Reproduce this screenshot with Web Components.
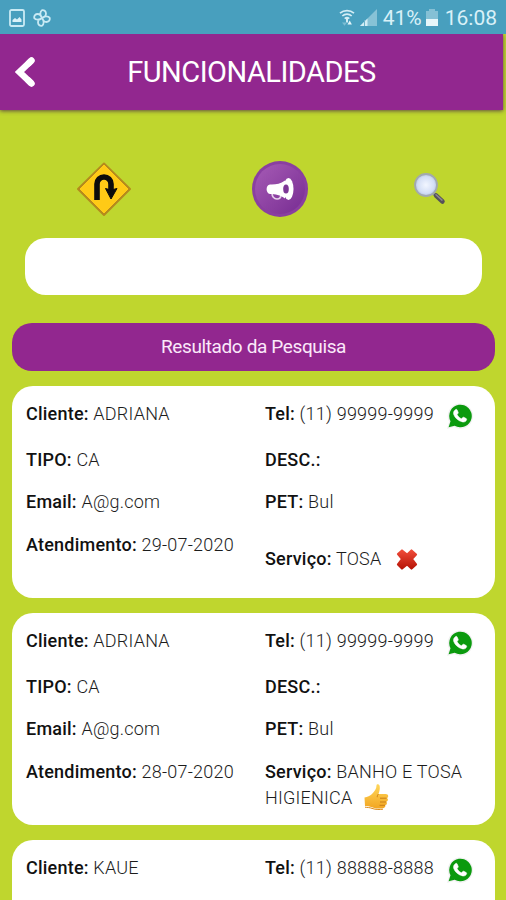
<!DOCTYPE html>
<html lang="pt-BR">
<head>
<meta charset="UTF-8">
<meta name="viewport" content="width=device-width, initial-scale=1">
<title>Funcionalidades</title>
<style>
    body {
        margin: 0;
        height: 900px;
        overflow: hidden;
        background-color: #bfd62e;
        font-family: Roboto, "Liberation Sans", sans-serif;
    }
</style>
</head>
<body>
<app-screen>
    <status-bar slot="status" battery="41%" time="16:08"></status-bar>
    <app-header slot="header">FUNCIONALIDADES</app-header>
    <tool-bar></tool-bar>
    <search-box></search-box>
    <section-title>Resultado da Pesquisa</section-title>
    <result-list></result-list>
</app-screen>

<script>
const resultsData = [
    {
        cliente: 'ADRIANA',
        tel: '(11) 99999-9999',
        tipo: 'CA',
        desc: '',
        email: 'A@g.com',
        pet: 'Bul',
        atendimento: '29-07-2020',
        servico: 'TOSA',
        status: 'no',
    },
    {
        cliente: 'ADRIANA',
        tel: '(11) 99999-9999',
        tipo: 'CA',
        desc: '',
        email: 'A@g.com',
        pet: 'Bul',
        atendimento: '28-07-2020',
        servico: 'BANHO E TOSA\nHIGIENICA',
        status: 'yes',
    },
    {
        cliente: 'KAUE',
        tel: '(11) 88888-8888',
    },
];

const icons = {
    whatsapp: `
        <svg width="28" height="28" viewBox="0 0 28 28">
            <path d="M1 27l2-7.200A12.700 12.700 0 1 1 8 25.100z" fill="#f1f1f1"/>
            <path d="M2.600 25.300l1.900-6A11.300 11.300 0 1 1 8.700 23.700z" fill="#0b9a0e"/>
            <path d="M9.600 7.600c.6-.5 1.300-.3 1.600.4l1 2.300c.2.500.1.900-.3 1.300l-.8 1c1 2 2.300 3.200 4.400 4.200l1.200-1.300c.4-.4.7-.4 1.200-.2l2.300 1.200c.5.300.6.700.4 1.300-.6 1.800-2.300 2.600-4.200 2.100-4.600-1.200-7.400-4-8.700-7.500-.6-1.900.2-3.700 1.900-4.800z" fill="#fff" stroke="#fff" stroke-width=".5"/>
        </svg>`,
    no: `
        <svg width="22" height="23" viewBox="0 0 22 23">
            <defs>
                <linearGradient id="red" x1="0" y1="0" x2="0" y2="1">
                    <stop offset="0" stop-color="#ee4a38"/>
                    <stop offset="1" stop-color="#b81508"/>
                </linearGradient>
            </defs>
            <path d="M6 2.500l5 4.200 4.500-4.200L20 6.500 15.800 11l4.200 5.500-4.500 4-4.500-4.200-5 4.200-4-4L6.200 11 2 6z" fill="url(#red)" stroke="url(#red)" stroke-width="2.200" stroke-linejoin="round"/>
        </svg>`,
    yes: `
        <svg width="26" height="27" viewBox="0 0 26 27">
            <defs>
                <linearGradient id="hand" x1="0" y1="0" x2="0" y2="1">
                    <stop offset="0" stop-color="#ffd75a"/>
                    <stop offset="1" stop-color="#f2a622"/>
                </linearGradient>
            </defs>
            <path d="M1.500 14.500c3-.6 5.500-1.500 7.500-3.500 2.500-2.600 4.500-5 4.500-8.500 0-1.800 2.800-1.600 3.200.8.400 2.700-.2 5-1.200 7.700h7.200c3 0 3.200 3.300 1.300 4 1.500 1 1.200 3.300-.6 3.700 1 1.200.6 3.100-1.100 3.400.5 1.600-.5 2.900-2.300 3.100-4.500.5-8 .4-11-1-2.400-1-4.500-.9-7-1.200z" fill="url(#hand)"/>
            <path d="M17 15.200h6.500M17 19h6M16.500 22.300H22M15.500 11c-1 1-1.300 2-1.200 3.200" fill="none" stroke="#c97f16" stroke-width="1"/>
            <path d="M2 24.200c2.500.3 4.500.2 7 1.200 4 1.500 8 1.200 11 .8" fill="none" stroke="#dc8c1c" stroke-width="1"/>
        </svg>`,
};

class AppScreen extends HTMLElement {
    constructor() {
        super();
        this.attachShadow({ mode: 'open' });
        this.shadowRoot.innerHTML = `
            <style>
                :host {
                    display: flex;
                    flex-direction: column;
                    width: 506px;
                    height: 900px;
                    overflow: hidden;
                }
                main {
                    display: flex;
                    flex-direction: column;
                    padding: 51px 11px 0 12px;
                }
            </style>
            <slot name="status"></slot>
            <slot name="header"></slot>
            <main><slot></slot></main>
        `;
    }
}

class StatusBar extends HTMLElement {
    constructor() {
        super();
        this.attachShadow({ mode: 'open' });
        this.shadowRoot.innerHTML = `
            <style>
                :host {
                    display: flex;
                    align-items: center;
                    box-sizing: border-box;
                    flex: none;
                    height: 34px;
                    padding: 1px 9px 0;
                    background-color: #489fbe;
                    color: #d9f1f8;
                    font-size: 21px;
                    line-height: 34px;
                }
                svg {
                    display: block;
                    flex: none;
                }
                .flower { margin-left: 8px; }
                .wifi { margin-left: auto; }
                .signal { margin-left: 5px; }
                .battery { margin: 0 7px 0 4px; }
                .level { margin-left: 6px; }
            </style>
            <svg width="16" height="18" viewBox="0 0 16 18">
                <rect x="1" y="1" width="14" height="16" rx="1.500" fill="none" stroke="#c9eaf4" stroke-width="1.800"/>
                <path d="M3.500 13V11l2.500-2 2 1.500L10.500 8l2 2.500V13z" fill="#d9f1f8"/>
            </svg>
            <svg class="flower" width="18" height="18" viewBox="0 0 18 18" fill="none" stroke="#c9eaf4" stroke-width="1.800" stroke-linejoin="round">
                <path d="M9 9C6.800 6.500 6.800 2.500 9 1.200c2.500-.3 4 1.200 4 3.500 0 2-1.500 3.300-4 4.300zM9 9c2.500-2.200 6.500-2.200 7.800 0 .3 2.500-1.200 4-3.500 4C11.300 13 10 11.500 9 9zM9 9c2.200 2.500 2.200 6.500 0 7.800-2.500.3-4-1.200-4-3.500C5 11.300 6.500 10 9 9zM9 9c-2.500 2.200-6.500 2.200-7.800 0C.9 6.500 2.400 5 4.700 5 6.700 5 8 6.500 9 9z"/>
            </svg>
            <svg class="wifi" width="16" height="17" viewBox="0 0 16 17">
                <path d="M1 4.200c4-3.500 10-3.500 14 0M3.300 7c2.700-2.500 6.700-2.500 9.400 0M5.700 9.600c1.400-1.200 3.200-1.200 4.600 0" fill="none" stroke="#d3edf5" stroke-width="1.700"/>
                <path d="M8 8.500v5" stroke="#d3edf5" stroke-width="2"/>
                <path d="M3 13.500h5l-2.500 3.300z" fill="#7dbdd3"/>
                <path d="M8.500 15.500l2.200-4 2.200 4z" fill="#e3f5fa"/>
            </svg>
            <svg class="signal" width="17" height="17" viewBox="0 0 17 17">
                <path d="M0 17L17 0v17z" fill="#87c2d6"/>
                <path d="M0 17l7.500-7.500V17z" fill="#d3edf5"/>
                <path d="M4.500 11v6" stroke="#6cb2ca" stroke-width="1"/>
            </svg>
            <span class="level"></span>
            <svg class="battery" width="12" height="17" viewBox="0 0 12 17">
                <path d="M3 0h6v2h3v15H0V2h3z" fill="#85c0d5"/>
                <path d="M0 10h12v7H0z" fill="#e6f6fa"/>
            </svg>
            <span class="time"></span>
        `;
    }

    connectedCallback() {
        this.shadowRoot.querySelector('.level').textContent = this.getAttribute('battery');
        this.shadowRoot.querySelector('.time').textContent = this.getAttribute('time');
    }
}

class AppHeader extends HTMLElement {
    constructor() {
        super();
        this.attachShadow({ mode: 'open' });
        this.shadowRoot.innerHTML = `
            <style>
                :host {
                    display: grid;
                    grid-template-columns: 40px 1fr 40px;
                    align-items: center;
                    box-sizing: border-box;
                    flex: none;
                    width: 503px;
                    height: 76px;
                    background-color: #92278f;
                    color: #fff;
                    box-shadow: 0 1px 4px rgba(70, 40, 70, .8);
                    clip-path: inset(0 -3px -6px 0);
                }
                svg {
                    display: block;
                    margin-left: 15px;
                }
                h1 {
                    margin: 0;
                    padding-bottom: 1px;
                    font-size: 29px;
                    font-weight: 400;
                    line-height: 34px;
                    letter-spacing: -.5px;
                    text-align: center;
                    white-space: nowrap;
                }
            </style>
            <svg width="22" height="32" viewBox="0 0 22 32">
                <path d="M16.500 4.500L4.500 16l12 11.500" fill="none" stroke="#fff" stroke-width="6.500"/>
                <path d="M16.500 4.500l-3 3M16.500 27.500l-3-3" fill="none" stroke="#fff" stroke-width="6.500" stroke-linecap="round"/>
            </svg>
            <h1><slot></slot></h1>
        `;
    }
}

class ToolBar extends HTMLElement {
    constructor() {
        super();
        this.attachShadow({ mode: 'open' });
        this.shadowRoot.innerHTML = `
            <style>
                :host {
                    display: flex;
                    align-items: center;
                    height: 56px;
                    padding-left: 64px;
                }
                svg {
                    display: block;
                    flex: none;
                }
                .horn { margin-left: 120px; }
                .lens { margin-left: 104px; }
            </style>
            <svg width="56" height="56" viewBox="0 0 56 56">
                <path d="M28 2.500L54 28 28 54 2 28z" fill="#b58a1c" stroke="#b58a1c" stroke-width="2" stroke-linejoin="round"/>
                <path d="M28 4L52 28 28 52 4 28z" fill="#ffca16" stroke="#ffca16" stroke-linejoin="round"/>
                <path d="M21 39V23a7 7 0 0 1 14 0V29" fill="none" stroke="#0c0c0c" stroke-width="5.600"/>
                <path d="M29.500 27.500l5.500 1.500 6-1.500-6 10.500z" fill="#0c0c0c" stroke="#0c0c0c" stroke-linejoin="round"/>
            </svg>
            <svg class="horn" width="56" height="56" viewBox="0 0 56 56">
                <defs>
                    <linearGradient id="disc" x1="0" y1="0" x2="1" y2="1">
                        <stop offset="0" stop-color="#a65bb5"/>
                        <stop offset="1" stop-color="#772c92"/>
                    </linearGradient>
                </defs>
                <circle cx="28" cy="28" r="28" fill="#8a3fa0"/>
                <circle cx="28" cy="28" r="25" fill="url(#disc)"/>
                <path d="M20 32c0 3.500 2 6 5 6s4-2 4-4.500" fill="none" stroke="#e6d2eb" stroke-width="1.700"/>
                <path d="M18 23.500c5.500.3 10-.6 15-4v18c-5-3.500-9.500-4.300-15-4.500-4.500-.6-4.500-9 0-9.500z" fill="#fff"/>
                <ellipse cx="36.500" cy="28" rx="5" ry="11" fill="#fff"/>
                <ellipse cx="34" cy="28" rx="2.800" ry="4.500" fill="#7d3796"/>
            </svg>
            <svg class="lens" width="36" height="34" viewBox="0 0 36 34">
                <defs>
                    <radialGradient id="glass">
                        <stop offset="0" stop-color="#f2f6ff"/>
                        <stop offset=".75" stop-color="#d3def5"/>
                        <stop offset="1" stop-color="#b3c2e0"/>
                    </radialGradient>
                </defs>
                <path d="M21 21l4 4" stroke="#8b9097" stroke-width="3"/>
                <path d="M24 23.500l6.500 6" stroke="#555259" stroke-width="4.500" stroke-linecap="round"/>
                <path d="M24 22.800l6 5.300" stroke="#8b8791" stroke-width="1.500" stroke-linecap="round"/>
                <circle cx="14" cy="13" r="11" fill="url(#glass)" stroke="#a2a9ae" stroke-width="1.800"/>
            </svg>
        `;
    }
}

class SearchBox extends HTMLElement {
    constructor() {
        super();
        this.attachShadow({ mode: 'open' });
        this.shadowRoot.innerHTML = `
            <style>
                :host {
                    display: block;
                    margin: 21px 13px 0;
                }
                input {
                    display: block;
                    box-sizing: border-box;
                    width: 100%;
                    height: 56.500px;
                    padding: 0 18px;
                    border: none;
                    border-radius: 21px;
                    background-color: #fff;
                    font: 18px Roboto, sans-serif;
                    outline: none;
                }
            </style>
            <input type="text">
        `;
    }
}

class SectionTitle extends HTMLElement {
    constructor() {
        super();
        this.attachShadow({ mode: 'open' });
        this.shadowRoot.innerHTML = `
            <style>
                :host {
                    display: block;
                    height: 48.500px;
                    margin-top: 28px;
                    border-radius: 20px;
                    background-color: #92278f;
                    color: #fbe9fa;
                    font-size: 19px;
                    line-height: 47px;
                    letter-spacing: -.38px;
                    text-align: center;
                }
            </style>
            <slot></slot>
        `;
    }
}

class ResultField extends HTMLElement {
    constructor() {
        super();
        this.attachShadow({ mode: 'open' });
        this.shadowRoot.innerHTML = `
            <style>
                :host {
                    display: block;
                    color: #1c1c1c;
                    font-size: 18px;
                    font-weight: 300;
                    line-height: 26px;
                    letter-spacing: .22px;
                }
                b {
                    font-weight: 500;
                    color: #111;
                }
                svg {
                    display: inline-block;
                    margin: -6px 0 -8px 7px;
                    vertical-align: middle;
                }
                :host([icon="no"]) {
                    margin-top: 2px;
                }
                :host([icon="no"]) svg {
                    margin: -7px 0 -6px 10px;
                }
                :host([icon="yes"]) svg {
                    margin: -10px 0 -5px 6px;
                }
            </style>
            <b></b>
            <span class="value"></span>
            <span class="icon"></span>
        `;
    }

    connectedCallback() {
        const lines = this.getAttribute('value').split('\n');
        this.shadowRoot.querySelector('b').textContent = this.getAttribute('label');
        this.shadowRoot.querySelector('.value').innerHTML = lines.map(line => `<span>${line}</span>`).join('<br>');
        this.shadowRoot.querySelector('.icon').innerHTML = icons[this.getAttribute('icon')] || '';
    }
}

class ResultCard extends HTMLElement {
    constructor() {
        super();
        this.attachShadow({ mode: 'open' });
        this.shadowRoot.innerHTML = `
            <style>
                :host {
                    display: grid;
                    grid-template-columns: 239px 1fr;
                    grid-template-rows: 52px 40px 45px 59px;
                    align-items: center;
                    box-sizing: border-box;
                    height: 212.500px;
                    padding: 2.200px 8px 0 14px;
                    border-radius: 21px;
                    background-color: #fff;
                }
                .last {
                    padding-top: 7px;
                }
                .top {
                    align-self: start;
                }
            </style>
        `;
    }

    set result(data) {
        const fields = [
            ['Cliente:', data.cliente, ''],
            ['Tel:', data.tel, 'whatsapp'],
            ['TIPO:', data.tipo, ''],
            ['DESC.:', data.desc, ''],
            ['Email:', data.email, ''],
            ['PET:', data.pet, ''],
            ['Atendimento:', data.atendimento, '', 'last top'],
            ['Serviço:', data.servico, data.status, 'last'],
        ];
        fields.forEach(([label, value, icon, className = '']) => {
            if (value === undefined) {
                return;
            }
            const field = document.createElement('result-field');
            field.setAttribute('label', label);
            field.setAttribute('value', value);
            field.setAttribute('icon', icon);
            field.className = className;
            this.shadowRoot.appendChild(field);
        });
    }
}

class ResultList extends HTMLElement {
    constructor() {
        super();
        this.attachShadow({ mode: 'open' });
        this.shadowRoot.innerHTML = `
            <style>
                :host {
                    display: flex;
                    flex-direction: column;
                    gap: 14.500px;
                    margin-top: 14.500px;
                }
                result-card {
                    flex: none;
                }
            </style>
        `;
    }

    connectedCallback() {
        resultsData.forEach(result => {
            const card = document.createElement('result-card');
            card.result = result;
            this.shadowRoot.appendChild(card);
        });
    }
}

customElements.define('app-screen', AppScreen);
customElements.define('status-bar', StatusBar);
customElements.define('app-header', AppHeader);
customElements.define('tool-bar', ToolBar);
customElements.define('search-box', SearchBox);
customElements.define('section-title', SectionTitle);
customElements.define('result-field', ResultField);
customElements.define('result-card', ResultCard);
customElements.define('result-list', ResultList);
</script>
</body>
</html>
